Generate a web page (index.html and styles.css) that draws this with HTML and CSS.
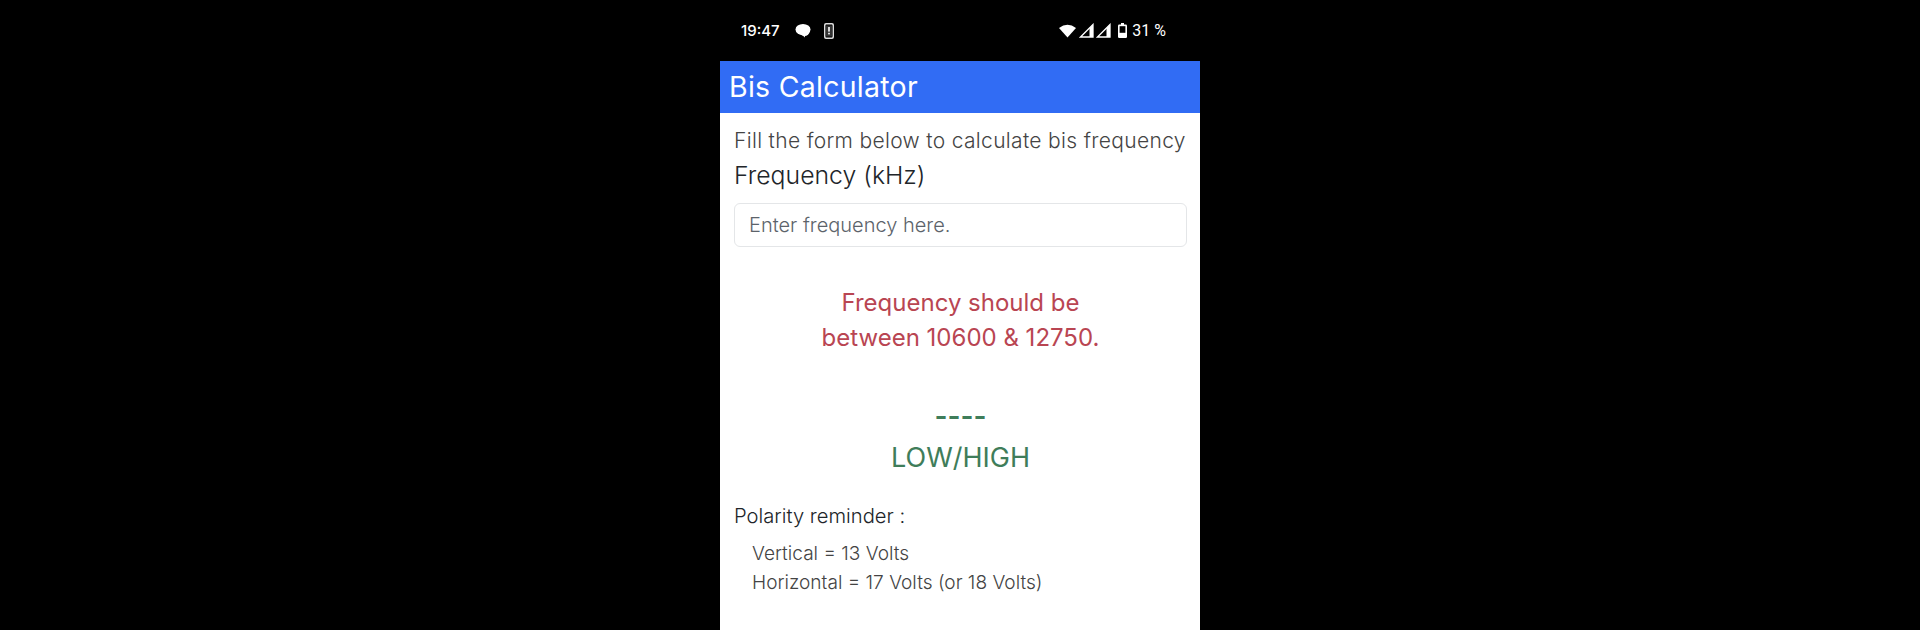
FILE: index.html
```html
<!DOCTYPE html>
<html lang="en">
<head>
    <meta charset="UTF-8">
    <meta name="viewport" content="width=device-width, initial-scale=1.0">
    <title>Bis Calculator</title>
    <link rel="stylesheet" href="styles.css">
</head>
<body>

    <div class="phone">
        <div class="status-bar">
            <div class="status-left">
                <span class="status-time">19:47</span>
                <svg class="icon-chat" width="16" height="15" viewBox="0 0 16 15">
                    <ellipse cx="8" cy="6.5" rx="7.5" ry="5.5" fill="#fff"/>
                    <ellipse cx="9.5" cy="8.5" rx="5" ry="4.5" fill="#fff"/>
                    <path d="M7 11 L11 11 L9.5 14.5 Z" fill="#fff"/>
                </svg>
                <svg class="icon-device" width="10" height="16" viewBox="0 0 10 16">
                    <rect x="0.8" y="0.8" width="8.4" height="14.4" rx="1.2" fill="none" stroke="#ddd" stroke-width="1.6"/>
                    <rect x="1.5" y="2.5" width="7" height="11" fill="#333"/>
                    <rect x="4.2" y="4" width="1.6" height="4.6" fill="#fff"/>
                    <rect x="4.2" y="9.8" width="1.6" height="1.6" fill="#fff"/>
                </svg>
            </div>
            <div class="status-right">
                <svg class="icon-wifi" width="17" height="14" viewBox="0 0 17 14">
                    <path d="M0 4 Q8.5 -2.5 17 4 L8.5 13.5 Z" fill="#fff"/>
                </svg>
                <svg class="icon-signal" width="15" height="15" viewBox="0 0 15 15">
                    <path d="M1.5 14 L14 1.5 L14 14 Z" fill="none" stroke="#fff" stroke-width="1.3"/>
                    <path d="M10.5 14 L10.5 5 L14 1.5 L14 14 Z" fill="#fff"/>
                </svg>
                <svg class="icon-signal" width="15" height="15" viewBox="0 0 15 15">
                    <path d="M1.5 14 L14 1.5 L14 14 Z" fill="none" stroke="#fff" stroke-width="1.3"/>
                    <path d="M10.5 14 L10.5 5 L14 1.5 L14 14 Z" fill="#fff"/>
                </svg>
                <svg class="icon-battery" width="9" height="15" viewBox="0 0 9 15">
                    <rect x="3" y="0" width="3" height="2" fill="#fff"/>
                    <rect x="0" y="1.5" width="9" height="13.5" rx="1.2" fill="#fff"/>
                    <rect x="1.6" y="3.2" width="5.8" height="6.6" fill="#000"/>
                </svg>
                <span class="status-battery">31 %</span>
            </div>
        </div>

        <div class="app-bar">Bis Calculator</div>

        <div class="content">
            <p class="intro">Fill the form below to calculate bis frequency</p>
            <label class="field-label" for="frequency">Frequency (kHz)</label>
            <input class="field-input" id="frequency" type="text" placeholder="Enter frequency here.">

            <p class="error-text">Frequency should be<br>between 10600 &amp; 12750.</p>

            <div class="result">
                <p class="result-value">----</p>
                <p class="result-band">LOW/HIGH</p>
            </div>

            <p class="reminder-title">Polarity reminder :</p>
            <div class="reminder-list">
                <p>Vertical = 13 Volts</p>
                <p>Horizontal = 17 Volts (or 18 Volts)</p>
            </div>
        </div>
    </div>

</body>
</html>
```

FILE: styles.css
```css
* {
    box-sizing: border-box;
}

body {
    margin: 0;
    background: #000;
    font-family: Inter, "Open Sans", sans-serif;
}

p {
    margin: 0;
}

.phone {
    width: 480px;
    height: 630px;
    margin: 0 auto;
    overflow: hidden;
    background: #fff;
}

.status-bar {
    display: flex;
    justify-content: space-between;
    align-items: center;
    height: 61px;
    padding: 0 34px 0 21px;
    background: #000;
    color: #fff;
}

.status-left,
.status-right {
    display: flex;
    align-items: center;
}

.status-time {
    font-size: 15px;
    font-weight: 500;
    margin-right: 15px;
}

.icon-device {
    margin-left: 13px;
}

.icon-signal {
    margin-left: 2px;
}

.icon-wifi {
    margin-right: 1px;
}

.icon-battery {
    margin-left: 7px;
}

.status-battery {
    font-family: Roboto, sans-serif;
    font-size: 16px;
    margin-left: 5px;
}

.app-bar {
    height: 52px;
    padding-left: 9px;
    background: #316cf4;
    color: #fff;
    font-size: 28.5px;
    letter-spacing: .26px;
    line-height: 52px;
}

.content {
    padding: 12px 13px 0 14px;
}

.intro {
    font-size: 21px;
    font-weight: 300;
    letter-spacing: .33px;
    line-height: 32px;
    color: #444;
    white-space: nowrap;
}

.field-label {
    display: block;
    font-size: 24.8px;
    line-height: 36px;
    font-weight: 300;
    color: #212529;
}

.field-input {
    display: block;
    width: 100%;
    height: 44px;
    margin-top: 10px;
    padding: 0 14px;
    border: 1px solid #e4e6e8;
    border-radius: 6px;
    font-family: inherit;
    font-size: 20px;
    font-weight: 300;
}

.field-input::placeholder {
    color: #5c636a;
    opacity: 1;
}

.error-text {
    margin-top: 38px;
    text-align: center;
    font-size: 24px;
    line-height: 35px;
    color: #b94552;
}

.result {
    margin-top: 43px;
    text-align: center;
    color: #3f7d5a;
}

.result-value {
    font-size: 28px;
    font-weight: 600;
    line-height: 36px;
}

.result-band {
    font-size: 27px;
    line-height: 40px;
    margin-top: 4px;
}

.reminder-title {
    margin-top: 24px;
    font-size: 20.2px;
    line-height: 28px;
    font-weight: 300;
    color: #212529;
}

.reminder-list {
    margin-top: 9px;
    padding-left: 18px;
    font-size: 19.1px;
    line-height: 28.5px;
    font-weight: 300;
    color: #444;
}
```
